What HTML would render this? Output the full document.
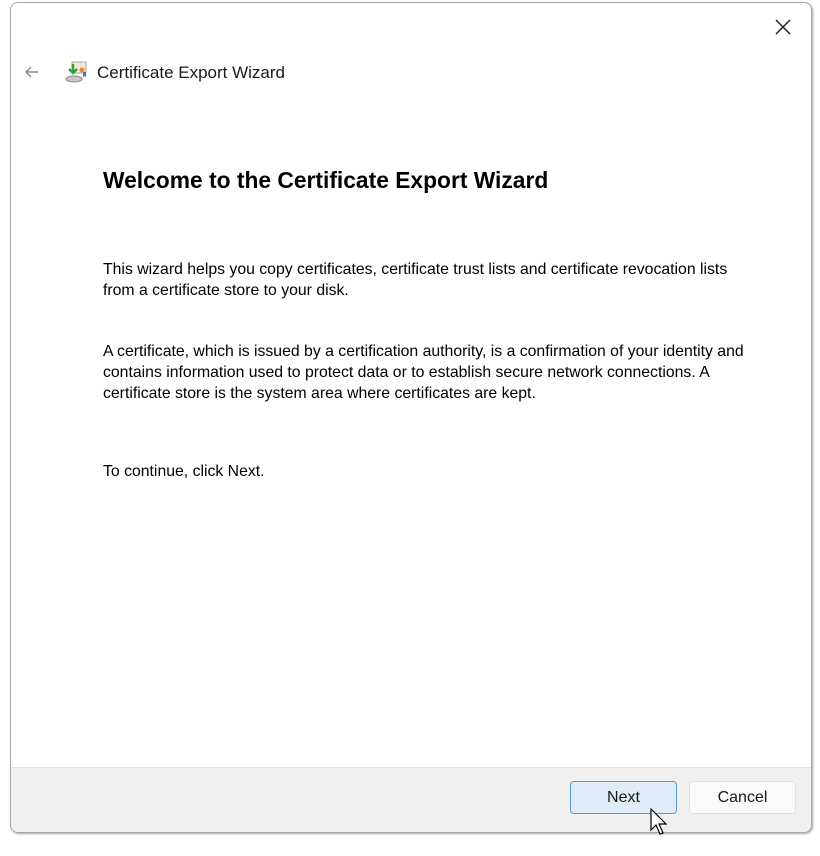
<!DOCTYPE html>
<html><head><style>
html,body{margin:0;padding:0;width:820px;height:856px;background:#fff;overflow:hidden;font-family:"Segoe UI","Liberation Sans",sans-serif;}
.win{position:absolute;left:10px;top:2px;width:800px;height:829px;background:#fff;border:1px solid #a8a8a8;border-radius:8px;box-shadow:1px 1px 2px rgba(0,0,0,0.35);overflow:hidden;}
.t{position:absolute;color:#000;font-size:15.8px;}
.foot{position:absolute;left:0;top:764px;width:800px;height:65px;background:#f0f0f0;border-top:1px solid #e4e4e4;}
.btn{position:absolute;top:781px;height:31px;border-radius:4px;font-size:16px;text-align:center;line-height:31px;color:#1a1a1a;}
</style></head><body>
<div class="win">
  <svg style="position:absolute;left:763px;top:15px" width="18" height="18"><path d="M2 2L16 16M16 2L2 16" stroke="#222" stroke-width="1.5"/></svg>
  <svg style="position:absolute;left:13px;top:62px" width="16" height="14"><path d="M14 7H2M7 2L2 7L7 12" stroke="#8a8a8a" stroke-width="1.4" fill="none"/></svg>
  <svg style="position:absolute;left:53px;top:57px" width="24" height="24">
    <rect x="8" y="2" width="14" height="11" fill="#f4ead8" stroke="#b8a890"/>
    <circle cx="18" cy="10" r="2.5" fill="#e08a3a"/>
    <path d="M19 12v5l1.5-1l1.5 1v-5" fill="#3a7ad0"/>
    <ellipse cx="10" cy="19" rx="8" ry="3" fill="#c8c8c8" stroke="#888"/>
    <path d="M9 4v8M5 9l4 4l4-4" stroke="#30a030" stroke-width="2.5" fill="none"/>
  </svg>
  <div class="t" style="left:86px;top:60px;font-size:17px;color:#1a1a1a">Certificate Export Wizard</div>
  <div class="t" style="left:92px;top:164px;font-size:22.8px;font-weight:bold">Welcome to the Certificate Export Wizard</div>
  <div class="t" style="left:92px;top:256px;line-height:21px;width:680px">This wizard helps you copy certificates, certificate trust lists and certificate revocation lists<br>from a certificate store to your disk.</div>
  <div class="t" style="left:92px;top:338px;line-height:21px;width:680px">A certificate, which is issued by a certification authority, is a confirmation of your identity and<br>contains information used to protect data or to establish secure network connections. A<br>certificate store is the system area where certificates are kept.</div>
  <div class="t" style="left:92px;top:460px">To continue, click Next.</div>
  <div class="foot"></div>
</div>
<div class="btn" style="left:570px;width:105px;background:#e0edf9;border:1px solid #5a9ad8;">Next</div>
<div class="btn" style="left:689px;width:105px;background:#fbfbfb;border:1px solid #e0e0e0;">Cancel</div>
<svg style="position:absolute;left:650px;top:808px" width="20" height="28"><path d="M1 1V22L6 17L10 26L13 25L9 16H16Z" fill="#fff" stroke="#000" stroke-width="1.2"/></svg>
</body></html>
